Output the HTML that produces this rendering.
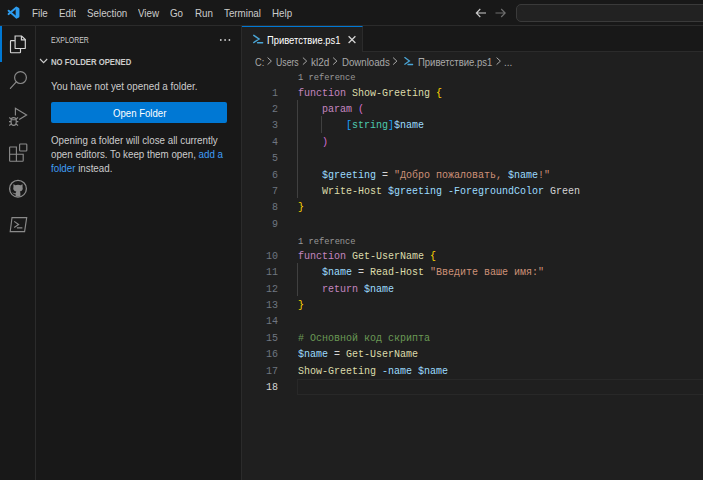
<!DOCTYPE html>
<html><head><meta charset="utf-8">
<style>
*{margin:0;padding:0;box-sizing:border-box}
html,body{width:703px;height:480px;overflow:hidden;background:#1f1f1f;font-family:"Liberation Sans",sans-serif;color:#cccccc}
.abs{position:absolute}
.t{position:absolute;white-space:nowrap;line-height:1;transform-origin:0 0}
#title{left:0;top:0;width:703px;height:26px;background:#181818;border-bottom:1px solid #2b2b2b}
.menu{position:absolute;top:8px;font-size:11px;line-height:11px;color:#cccccc;white-space:nowrap;transform-origin:0 0;transform:scaleX(0.89)}
#act{left:0;top:26px;width:36px;height:454px;background:#181818;border-right:1px solid #2b2b2b}
#side{left:36px;top:26px;width:206px;height:454px;background:#181818;border-right:1px solid #2b2b2b}
#tabs{left:242px;top:26px;width:461px;height:26px;background:#181818;border-bottom:1px solid #2b2b2b}
#tab{left:242px;top:26px;width:121px;height:26px;background:#1f1f1f;border-top:1px solid #0078d4;border-right:1px solid #2b2b2b}
.code{position:absolute;font-family:"Liberation Mono",monospace;font-size:11px;line-height:10px;white-space:pre;left:297.5px;color:#d4d4d4;transform-origin:0 0;transform:scaleX(0.90909)}
.ln{position:absolute;font-family:"Liberation Mono",monospace;font-size:11px;line-height:10px;color:#6e7681;text-align:right;width:44px;left:234px;transform-origin:100% 0;transform:scaleX(0.90909)}
.ln.cur{color:#d4d4d4}
.kw{color:#c586c0}.fn{color:#dcdcaa}.b1{color:#ffd700}.b2{color:#da70d6}.b3{color:#179fff}
.ty{color:#4ec9b0}.va{color:#9cdcfe}.op{color:#d4d4d4}.st{color:#ce9178}.cm{color:#6a9955}
.lens{color:#999999;font-size:9.6px;line-height:9px}
.guide{position:absolute;width:1px;background:#404040}
</style></head><body>
<div id="title" class="abs"></div>
<svg class="abs" style="left:0;top:0" width="30" height="26" viewBox="0 0 30 26">
  <g transform="translate(13.7 12.75) scale(0.94) translate(-13.7 -12.75)">
  <path d="M16.6 7.2 L8.3 14.2" stroke="#2d9cee" stroke-width="2.1" stroke-linecap="round"/>
  <path d="M16.6 17.9 L8.3 10.6" stroke="#2d9cee" stroke-width="2.1" stroke-linecap="round"/>
  <path d="M15.8 7.0 Q16.8 6.4 18.2 7.0 L19.2 7.6 Q19.8 8 19.8 8.8 V16.6 Q19.8 17.4 19.2 17.8 L18.2 18.4 Q16.8 19 15.8 18.4 Z" fill="#2d9cee"/>
  </g>
</svg>
<div class="menu" style="left:32px">File</div>
<div class="menu" style="left:59px">Edit</div>
<div class="menu" style="left:87px">Selection</div>
<div class="menu" style="left:138px">View</div>
<div class="menu" style="left:170px">Go</div>
<div class="menu" style="left:195px">Run</div>
<div class="menu" style="left:224px">Terminal</div>
<div class="menu" style="left:272px">Help</div>
<svg class="abs" style="left:470px;top:5px" width="40" height="16" viewBox="470 5 40 16">
  <path d="M476.3 13 H486 M480.3 9 L476.3 13 L480.3 17" stroke="#cccccc" stroke-width="1.1" fill="none"/>
  <path d="M495.5 13 H505.2 M501.2 9 L505.2 13 L501.2 17" stroke="#6f6f6f" stroke-width="1.1" fill="none"/>
</svg>
<div class="abs" style="left:516px;top:4px;width:220px;height:18px;border:1px solid #3a3a3a;border-radius:5px;background:#222222"></div>

<div id="act" class="abs"></div>
<div class="abs" style="left:0;top:26px;width:2px;height:36px;background:#0078d4"></div>
<svg class="abs" style="left:0;top:0" width="36" height="240" viewBox="0 0 36 240" fill="none">
  <!-- files -->
  <g stroke="#d7d7d7" stroke-width="1.15">
    <path d="M15.1 36 H21.6 L25.3 39.6 V47.9 Q25.3 48.5 24.7 48.5 H15.7 Q15.1 48.5 15.1 47.9 Z"/>
    <path d="M21.4 36 V39.8 H25.3"/>
    <path d="M14.9 40.6 H11.1 Q10.5 40.6 10.5 41.2 V52.1 Q10.5 52.7 11.1 52.7 H19.9 Q20.5 52.7 20.5 52.1 V48.6"/>
  </g>
  <!-- search -->
  <g stroke="#8a8a8a" stroke-width="1.2">
    <circle cx="20.5" cy="77.6" r="5.9"/>
    <path d="M16.3 81.9 L10.4 88.3" stroke-linecap="round"/>
  </g>
  <!-- run debug -->
  <g stroke="#8a8a8a" stroke-width="1.15">
    <path d="M15.4 115.5 V108.2 L26.6 115.1 L19.2 119.6"/>
    <path d="M11.1 120.2 Q11.1 117.6 13.65 117.6 Q16.2 117.6 16.2 120.2 V122.4 Q16.2 125.3 13.65 125.3 Q11.1 125.3 11.1 122.4 Z"/>
    <path d="M11.1 119.7 H16.2 M9.2 117.6 L11.3 118.9 M18.1 117.6 L16 118.9 M9 121.6 H11.1 M16.2 121.6 H18.3 M9.2 125.4 L11.4 124 M18.1 125.4 L15.9 124"/>
  </g>
  <!-- extensions -->
  <g stroke="#8a8a8a" stroke-width="1.15">
    <path d="M9.6 147.6 Q9.6 147 10.2 147 H16.4 V154.2 H23.2 V160.6 Q23.2 161.2 22.6 161.2 H10.2 Q9.6 161.2 9.6 160.6 Z"/>
    <path d="M9.6 154.2 H16.4 V161.2"/>
    <rect x="19.6" y="144" width="7.2" height="7" rx="0.8"/>
  </g>
  <!-- github -->
  <g>
    <circle cx="18" cy="188.7" r="8.4" stroke="#8a8a8a" stroke-width="1.3"/>
    <path d="M13.6 184 L15.1 185.2 Q18 184.4 20.9 185.2 L22.4 184 Q22.8 186 22.5 187 Q23 188 22.6 189.5 Q21.7 191.3 19.8 191.6 Q20.4 192.3 20.4 193.4 V196.6 H15.6 V194.2 Q14 194.4 13.1 193.2 Q12.6 192.4 12 192.3 Q12.8 192.1 13.4 192.8 Q14.2 193.6 15.7 193.2 Q15.8 192.2 16.3 191.6 Q14.3 191.3 13.4 189.5 Q13 188 13.5 187 Q13.2 186 13.6 184 Z" fill="#8a8a8a"/>
  </g>
  <!-- powershell -->
  <g stroke="#8a8a8a" stroke-width="1.15">
    <path d="M12 217.6 H26.7 L24.6 231.6 H10.2 Z"/>
    <path d="M14.2 221.4 L18.6 224.5 L14.2 227.5 M16.9 227.8 H22.4"/>
  </g>
</svg>

<div id="side" class="abs"></div>
<div class="t" style="left:51px;top:35.8px;font-size:9.2px;transform:scaleX(0.755)">EXPLORER</div>
<svg class="abs" style="left:218px;top:37px" width="14" height="6" viewBox="0 0 14 6"><circle cx="2.8" cy="3" r="0.9" fill="#cccccc"/><circle cx="7.1" cy="3" r="0.9" fill="#cccccc"/><circle cx="11.4" cy="3" r="0.9" fill="#cccccc"/></svg>
<svg class="abs" style="left:38px;top:56px" width="12" height="10" viewBox="0 0 12 10"><path d="M2 3 L5.6 6.6 L9.2 3" stroke="#cccccc" stroke-width="1.1" fill="none"/></svg>
<div class="t" style="left:51px;top:58px;font-size:8.6px;font-weight:bold;transform:scaleX(0.9)">NO FOLDER OPENED</div>
<div class="t" style="left:51px;top:82px;font-size:10px;transform:scaleX(0.985)">You have not yet opened a folder.</div>
<div class="abs" style="left:51px;top:102px;width:176px;height:21px;background:#0078d4;border-radius:2px"></div>
<div class="t" style="left:112.5px;top:108.5px;font-size:10px;color:#ffffff;transform:scaleX(0.96)">Open Folder</div>
<div class="abs" style="left:51px;top:134px;width:200px;font-size:10px;line-height:14px;color:#cccccc;white-space:nowrap;transform-origin:0 0;transform:scaleX(0.977)">Opening a folder will close all currently<br>open editors. To keep them open, <span style="color:#3f9df6">add a</span><br><span style="color:#3f9df6">folder</span> instead.</div>

<div id="tabs" class="abs"></div>
<div id="tab" class="abs"></div>
<svg class="abs" style="left:250px;top:32px" width="16" height="14" viewBox="250 32 16 14"><path d="M253.8 35.4 L259 39 L253.8 42.5 M257.6 42.8 H262.6" stroke="#4aa5d6" stroke-width="1.5" fill="none" stroke-linecap="round"/></svg>
<div class="t" style="left:267px;top:36px;font-size:10px;color:#ffffff;transform:scaleX(0.94)">Приветствие.ps1</div>
<svg class="abs" style="left:346px;top:34px" width="12" height="12" viewBox="346 34 12 12"><path d="M348.6 36.3 L355.4 43 M355.4 36.3 L348.6 43" stroke="#d4d4d4" stroke-width="1.25"/></svg>

<div class="t" style="left:255px;top:57.5px;font-size:10px;color:#a9a9a9;transform:scaleX(0.92)">C:</div>
<div class="t" style="left:276px;top:57.5px;font-size:10px;color:#a9a9a9;transform:scaleX(0.87)">Users</div>
<div class="t" style="left:311px;top:57.5px;font-size:10px;color:#a9a9a9">kl2d</div>
<div class="t" style="left:341.5px;top:57.5px;font-size:10px;color:#a9a9a9;transform:scaleX(0.965)">Downloads</div>
<div class="t" style="left:417.5px;top:57.5px;font-size:10px;color:#a9a9a9;transform:scaleX(0.95)">Приветствие.ps1</div>
<div class="t" style="left:504px;top:57.5px;font-size:10px;color:#a9a9a9">...</div>
<svg class="abs" style="left:0;top:50px" width="703" height="20" viewBox="0 50 703 20" fill="none" stroke="#a9a9a9" stroke-width="1">
  <path d="M267.6 57.6 L271.4 61.1 L267.6 64.6 M302.9 57.6 L306.7 61.1 L302.9 64.6 M333.1 57.6 L336.9 61.1 L333.1 64.6 M393.1 57.6 L396.9 61.1 L393.1 64.6 M496.6 57.6 L500.4 61.1 L496.6 64.6"/>
  <path d="M404.8 57.6 L409.4 61 L404.8 64.2 M408 64.5 H412.6" stroke="#4aa5d6" stroke-width="1.3" stroke-linecap="round"/>
</svg>

<div class="guide" style="left:297px;top:100.00px;height:98.40px"></div>
<div class="guide" style="left:321px;top:116.40px;height:16.40px"></div>
<div class="guide" style="left:297px;top:263.20px;height:32.80px"></div>
<div class="abs" style="left:297px;top:378.80px;width:406px;height:16.40px;border:1px solid #282828;border-right:none"></div>
<div class="code lens" style="top:73.40px">1 reference</div>
<div class="ln" style="top:87.60px">1</div>
<div class="code" style="top:87.60px"><span class="kw">function</span> <span class="fn">Show-Greeting</span> <span class="b1">{</span></div>
<div class="ln" style="top:104.00px">2</div>
<div class="code" style="top:104.00px">    <span class="kw">param</span> <span class="b2">(</span></div>
<div class="ln" style="top:120.40px">3</div>
<div class="code" style="top:120.40px">        <span class="b3">[</span><span class="ty">string</span><span class="b3">]</span><span class="va">$name</span></div>
<div class="ln" style="top:136.80px">4</div>
<div class="code" style="top:136.80px">    <span class="b2">)</span></div>
<div class="ln" style="top:153.20px">5</div>
<div class="ln" style="top:169.60px">6</div>
<div class="code" style="top:169.60px">    <span class="va">$greeting</span> <span class="op">=</span> <span class="st">"Добро пожаловать, </span><span class="va">$name</span><span class="st">!"</span></div>
<div class="ln" style="top:186.00px">7</div>
<div class="code" style="top:186.00px">    <span class="fn">Write-Host</span> <span class="va">$greeting</span> <span class="va">-ForegroundColor</span> <span class="op">Green</span></div>
<div class="ln" style="top:202.40px">8</div>
<div class="code" style="top:202.40px"><span class="b1">}</span></div>
<div class="ln" style="top:218.80px">9</div>
<div class="code lens" style="top:236.60px">1 reference</div>
<div class="ln" style="top:250.80px">10</div>
<div class="code" style="top:250.80px"><span class="kw">function</span> <span class="fn">Get-UserName</span> <span class="b1">{</span></div>
<div class="ln" style="top:267.20px">11</div>
<div class="code" style="top:267.20px">    <span class="va">$name</span> <span class="op">=</span> <span class="fn">Read-Host</span> <span class="st">"Введите ваше имя:"</span></div>
<div class="ln" style="top:283.60px">12</div>
<div class="code" style="top:283.60px">    <span class="kw">return</span> <span class="va">$name</span></div>
<div class="ln" style="top:300.00px">13</div>
<div class="code" style="top:300.00px"><span class="b1">}</span></div>
<div class="ln" style="top:316.40px">14</div>
<div class="ln" style="top:332.80px">15</div>
<div class="code" style="top:332.80px"><span class="cm"># Основной код скрипта</span></div>
<div class="ln" style="top:349.20px">16</div>
<div class="code" style="top:349.20px"><span class="va">$name</span> <span class="op">=</span> <span class="fn">Get-UserName</span></div>
<div class="ln" style="top:365.60px">17</div>
<div class="code" style="top:365.60px"><span class="fn">Show-Greeting</span> <span class="va">-name</span> <span class="va">$name</span></div>
<div class="ln cur" style="top:382.00px">18</div>
</body></html>
